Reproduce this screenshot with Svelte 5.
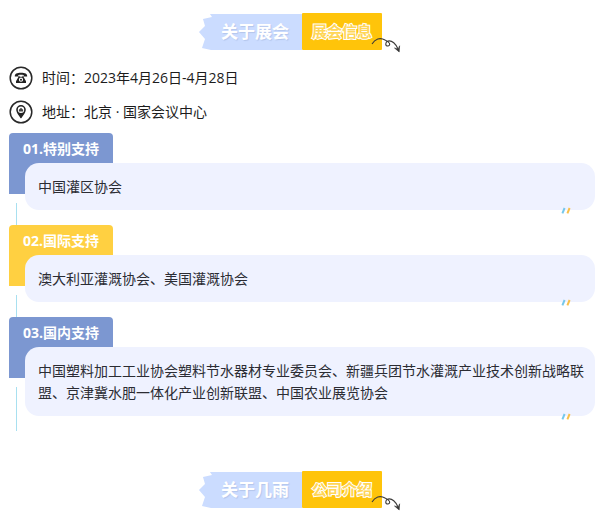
<script>
  const supports = [
    { title: "01.特别支持", body: "中国灌区协会", tone: "blue" },
    {
      title: "02.国际支持",
      body: "澳大利亚灌溉协会、美国灌溉协会",
      tone: "yellow",
    },
    {
      title: "03.国内支持",
      body: "中国塑料加工工业协会塑料节水器材专业委员会、新疆兵团节水灌溉产业技术创新战略联盟、京津冀水肥一体化产业创新联盟、中国农业展览协会",
      tone: "blue",
    },
  ];
</script>

{#snippet banner(main, sub)}
  <h2 class="banner">
    <span class="main">{main}</span>
    <span class="sub">{sub}</span>
    <svg class="arrow" width="30" height="16" viewBox="0 0 30 16" aria-hidden="true">
      <path
        d="M1 7C4 2 9 0 14 3C19 5 20 8 17 9C14 9 14 5 17 4C21 3 25 7 27 12"
        fill="none"
        stroke="#3b3a38"
        stroke-width="1.1"
      />
      <path d="M23.5 11L27.2 12.2L28.6 8.8L28.2 15Z" fill="#333" stroke="#333" stroke-width=".6" />
    </svg>
  </h2>
{/snippet}

<main>
  {@render banner("关于展会", "展会信息")}

  <div class="info">
    <p>
      <svg width="24" height="24" viewBox="0 0 24 24" aria-hidden="true">
        <circle cx="12" cy="12" r="10.8" fill="#fff" stroke="#292929" stroke-width="1.5" />
        <path
          d="M5.8 10.6C5.6 7.8 8 6.8 12 6.8S18.4 7.8 18.2 10.6H14.9V9.2C13 8.7 11 8.7 9.1 9.2V10.6Z"
          fill="#222"
        />
        <path
          fill-rule="evenodd"
          d="M9.4 9.8H10.5V10.8H13.5V9.8H14.6V11L17 15.2V17H7V15.2L9.4 11ZM12 11.6A2.1 2.1 0 1 0 12 15.8A2.1 2.1 0 1 0 12 11.6Z"
          fill="#222"
        />
        <circle cx="12" cy="13.7" r="1" fill="#222" />
      </svg>
      <span>时间：2023年4月26日-4月28日</span>
    </p>
    <p>
      <svg width="24" height="24" viewBox="0 0 24 24" aria-hidden="true">
        <circle cx="12" cy="12" r="10.8" fill="#fff" stroke="#292929" stroke-width="1.5" />
        <path
          fill-rule="evenodd"
          d="M12 5A4.8 4.8 0 0 0 7.2 9.8C7.2 13 12 18.6 12 18.6S16.8 13 16.8 9.8A4.8 4.8 0 0 0 12 5ZM12 6.5A3.2 3.2 0 1 1 12 12.9A3.2 3.2 0 1 1 12 6.5Z"
          fill="#222"
        />
        <path d="M9.9 9.8L12 7.8L14.1 9.8V11.6H9.9Z" fill="#444" />
      </svg>
      <span>地址：北京 · 国家会议中心</span>
    </p>
  </div>

  <div class="supports">
    {#each supports as item}
      <section class="support">
        <h3 class={item.tone}>{item.title}</h3>
        <div class="rail"></div>
        <div class="card">
          <p>{item.body}</p>
          <svg class="marks" width="10" height="8" viewBox="0 0 10 8" aria-hidden="true">
            <path d="M3.6 1L1.4 6.4" stroke="#76c8ec" stroke-width="2" />
            <path d="M8.6 1L6.4 6.4" stroke="#f8c04a" stroke-width="2" />
          </svg>
        </div>
      </section>
    {/each}
  </div>

  {@render banner("关于几雨", "公司介绍")}
</main>

<style>
  :global(body) {
    margin: 0;
    background: #fff;
  }
  main {
    padding: 13px 0 10px;
    font-family: "Open Sans", "Noto Sans CJK SC", sans-serif;
    font-size: 14px;
    line-height: 22px;
    color: #2b2c33;
  }
  h2,
  h3,
  p {
    margin: 0;
  }
  .banner {
    display: flex;
    justify-content: center;
    align-items: flex-end;
    line-height: 36px;
  }
  .main {
    height: 36px;
    padding: 0 13px 0 22px;
    background: #cbdcff;
    clip-path: polygon(
      11px 0,
      100% 0,
      100% 100%,
      12px 100%,
      3px 34px,
      6px 25px,
      0 18px,
      6px 12px,
      4px 5px,
      13px 3px
    );
    color: #fff;
    font-size: 17px;
    text-shadow: 1px 1px 1px #b4c6ec;
  }
  .sub {
    height: 37px;
    padding: 0 10px;
    border-radius: 1px;
    background: #ffc40a;
    color: #ffd658;
    font-size: 15px;
    -webkit-text-stroke: 2px #fff;
    paint-order: stroke fill;
  }
  .arrow {
    margin: 0 0 -3px -11px;
  }
  .info {
    padding: 11px 9px 4px;
    color: #1c1c1c;
  }
  .info p {
    display: flex;
    align-items: center;
    gap: 9px;
    height: 34px;
  }
  .supports {
    padding: 0 5px 0 9px;
    margin-bottom: 40px;
  }
  .support {
    display: grid;
    grid-template-columns: 16px 1fr;
    grid-template-rows: 30px auto 15px;
  }
  h3 {
    grid-area: 1 / 1 / 4 / 3;
    justify-self: start;
    align-self: start;
    box-sizing: border-box;
    height: 61px;
    padding: 5px 14px;
    border-radius: 4px 4px 0 0;
    color: #fff;
    font-size: 14px;
  }
  .blue {
    background: #7c97d1;
  }
  .yellow {
    background: #ffd041;
  }
  .rail {
    grid-area: 1 / 1 / 4 / 2;
    width: 1px;
    margin: 70px 0 0 7px;
    background: #a8e0f0;
  }
  .card {
    grid-area: 2 / 2;
    position: relative;
    padding: 13px 11px 12px 13px;
    border-radius: 14px;
    background: #eff2ff;
    text-align: justify;
  }
  .marks {
    position: absolute;
    right: 24px;
    bottom: -5px;
  }
</style>
